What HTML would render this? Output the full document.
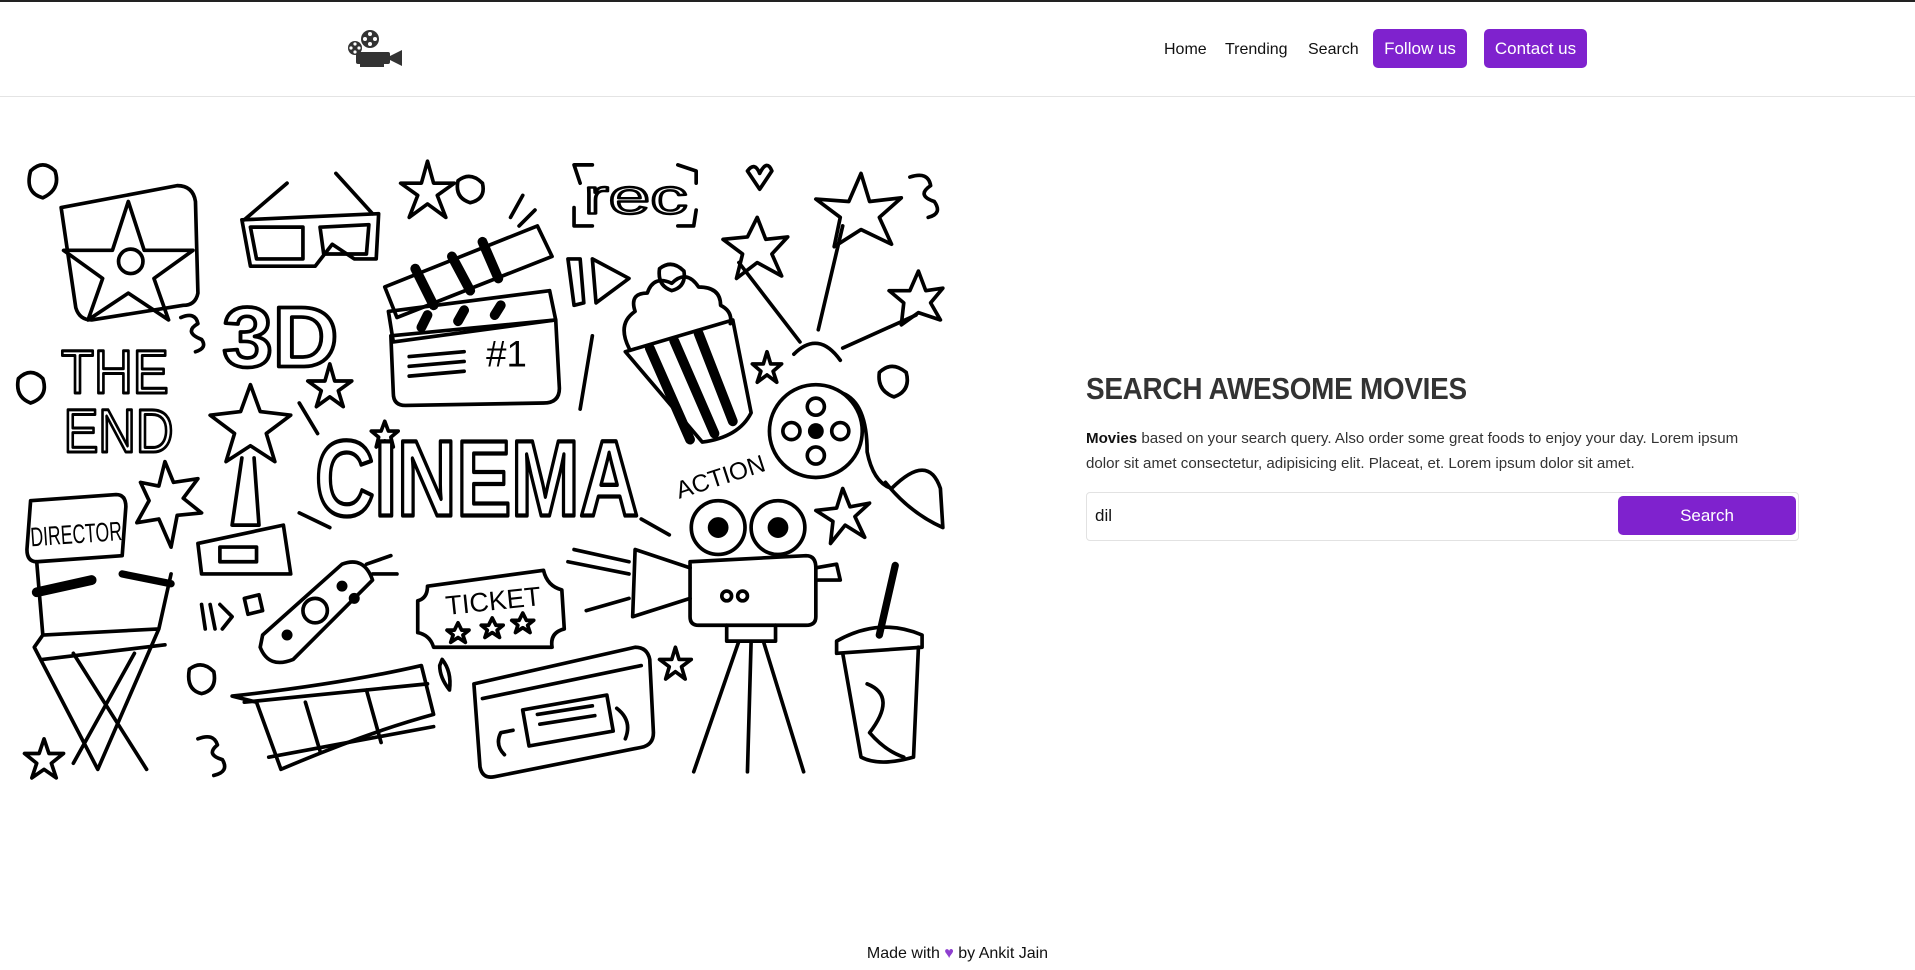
<!DOCTYPE html>
<html><head><meta charset="utf-8"><style>
*{margin:0;padding:0;box-sizing:border-box}
body{width:1915px;height:970px;background:#fff;position:relative;overflow:hidden;font-family:"Liberation Sans",sans-serif;color:#222}
.top{position:absolute;left:0;top:0;width:1915px;height:2px;background:#222}
.hb{position:absolute;left:0;top:96px;width:1915px;height:1px;background:#e4e4e4}
.nav{position:absolute;top:41px;font-size:16px;color:#111}
.btn{position:absolute;top:29px;height:39px;background:#7f22ce;color:#fff;border-radius:5px;font-size:17px;line-height:39px;text-align:center}
h1{position:absolute;left:1086px;top:371px;font-size:31px;font-weight:bold;color:#333;white-space:nowrap;transform:scaleX(.9);transform-origin:left;letter-spacing:-.3px}
.p{position:absolute;left:1086px;top:427px;font-size:15.1px;line-height:24.5px;color:#333;white-space:nowrap}
.inp{position:absolute;left:1086px;top:492px;width:713px;height:49px;border:1px solid #e2e2e2;border-radius:4px}
.sb{position:absolute;left:1618px;top:496px;width:178px;height:39px;background:#7f22ce;color:#fff;border-radius:5px;font-size:17px;line-height:39px;text-align:center}
.foot{position:absolute;left:0;width:1915px;top:945px;text-align:center;font-size:16px;color:#111}
</style></head><body>
<div class="top"></div>
<svg style="position:absolute;left:346px;top:30px" width="58" height="38" viewBox="0 0 58 38">
<g fill="#333"><circle cx="24" cy="9" r="9"/><circle cx="9" cy="18" r="7"/><rect x="10" y="22" width="34" height="12" rx="2"/><polygon points="44,26 56,20 56,36 44,30"/><rect x="14" y="34" width="24" height="3"/></g>
<g fill="#fff"><circle cx="24" cy="4" r="2"/><circle cx="24" cy="14" r="2"/><circle cx="19" cy="9" r="2"/><circle cx="29" cy="9" r="2"/><circle cx="9" cy="14" r="1.6"/><circle cx="9" cy="22" r="1.6"/><circle cx="5" cy="18" r="1.6"/><circle cx="13" cy="18" r="1.6"/></g>
</svg>
<div class="nav" style="left:1164px">Home</div>
<div class="nav" style="left:1225px">Trending</div>
<div class="nav" style="left:1308px">Search</div>
<div class="btn" style="left:1373px;width:94px">Follow us</div>
<div class="btn" style="left:1484px;width:103px">Contact us</div>
<div class="hb"></div>

<svg style="position:absolute;left:0;top:0" width="1915" height="970" viewBox="0 0 1568 794.3" fill="none" stroke="#000" stroke-width="3" stroke-linejoin="round" stroke-linecap="round">
<path d="M50 170 L145 152 Q158 152 160 165 L162 240 Q160 250 150 250 L75 262 Q65 262 62 252 Z"/>
<path d="M105 165 L118 205 L158 205 L126 228 L138 262 L105 240 L72 262 L84 228 L52 205 L92 205 Z"/><circle cx="107" cy="214" r="10"/>
<path d="M198 180 L310 175 L308 212 L290 212 L272 200 L258 218 L205 218 Z"/><path d="M205 186 L248 186 L248 212 L210 212 Z M262 186 L302 184 L300 208 L265 208 Z"/><path d="M200 180 L235 150 M305 175 L275 142"/>
<path d="M350 132 L355 150 L372 150 L358 160 L365 178 L350 167 L335 178 L342 160 L328 150 L345 150 Z"/>
<path d="M270 298 L274 312 L288 312 L277 320 L281 333 L270 325 L259 333 L263 320 L252 312 L266 312 Z"/>
<path d="M628 288 L631 298 L640 298 L633 304 L636 313 L628 307 L620 313 L623 304 L616 298 L625 298 Z"/>
<path d="M315 345 L318 353 L326 353 L320 358 L322 366 L315 361 L308 366 L310 358 L304 353 L312 353 Z"/>
<path d="M36 605 L40 617 L52 617 L42 625 L46 637 L36 630 L26 637 L30 625 L20 617 L32 617 Z"/>
<path d="M553 530 L556 540 L566 540 L558 546 L561 556 L553 550 L545 556 L548 546 L540 540 L550 540 Z"/>
<path d="M690 400 L696 415 L712 412 L700 423 L708 440 L692 430 L680 445 L682 427 L668 418 L685 416 Z"/>
<path d="M135 378 L142 395 L162 392 L150 408 L165 420 L145 422 L140 448 L130 425 L112 428 L122 410 L115 395 L130 398 Z"/>
<path d="M475 150 L470 135 L485 135 M470 170 L470 185 L485 185 M555 135 L570 140 L570 150 M570 172 L568 185 L555 185"/>
<text x="478" y="175" font-family="Liberation Sans" font-size="40" stroke-width="2" fill="none" textLength="85" lengthAdjust="spacingAndGlyphs">rec</text>
<path d="M612 140 Q618 132 622 142 Q628 130 632 140 L622 155 Z"/>
<path d="M320 275 L455 262 L458 318 Q458 330 445 330 L332 332 Q322 332 322 322 Z"/><path d="M315 235 L440 185 L452 210 L325 260 Z"/><path d="M318 255 L450 238 L455 262 L322 280 Z"/>
<path d="M340 220 L355 250 M370 210 L385 238 M395 198 L408 228 M345 268 L350 258 M375 263 L380 254 M405 258 L410 250" stroke-width="8"/>
<path d="M335 292 L380 288 M335 300 L380 296 M335 308 L380 304"/><text x="398" y="300" font-family="Liberation Sans" font-size="30" fill="#000" stroke="none">#1</text>
<path d="M465 212 L470 250 L478 248 L475 212 Z M485 212 L515 228 L488 248 Z"/>
<text x="182" y="300" font-family="Liberation Sans" font-weight="bold" font-size="70" stroke-width="3" fill="#fff" textLength="95" lengthAdjust="spacingAndGlyphs">3D</text>
<text x="50" y="322" font-family="Liberation Sans" font-size="50" stroke-width="2.5" fill="#fff" textLength="88" lengthAdjust="spacingAndGlyphs">THE</text>
<text x="52" y="370" font-family="Liberation Sans" font-size="50" stroke-width="2.5" fill="#fff" textLength="90" lengthAdjust="spacingAndGlyphs">END</text>
<path d="M512 288 L600 262 L615 338 Q605 358 575 362 Z"/><path d="M532 285 L565 360 M552 279 L585 355 M572 273 L600 345" stroke-width="8"/>
<path d="M515 285 Q505 265 520 255 Q515 240 530 240 Q535 225 550 232 Q562 220 572 235 Q590 235 590 250 Q600 255 598 265"/>
<path d="M650 290 Q670 270 688 295 M655 280 L605 215 M670 270 L690 185 M690 285 L750 258"/>
<path d="M620 178 L627 196 L645 194 L632 208 L640 226 L620 215 L603 228 L608 208 L592 196 L612 194 Z"/>
<path d="M705 142 L712 165 L738 162 L720 178 L730 200 L705 188 L683 202 L688 178 L668 163 L695 165 Z"/>
<path d="M752 222 L758 238 L772 236 L762 248 L770 262 L752 256 L738 266 L740 248 L728 238 L745 238 Z"/>
<circle cx="668" cy="353" r="38"/><circle cx="668" cy="353" r="5" fill="#000"/><circle cx="668" cy="333" r="7"/><circle cx="668" cy="373" r="7"/><circle cx="648" cy="353" r="7"/><circle cx="688" cy="353" r="7"/>
<path d="M690 322 Q710 330 710 370 Q715 395 730 400 Q760 370 770 400 L772 432 Q745 420 725 395"/>
<text x="258" y="422" font-family="Liberation Sans" font-weight="bold" font-size="88" stroke-width="3.5" fill="#fff" textLength="265" lengthAdjust="spacingAndGlyphs">CINEMA</text>
<path d="M260 355 L245 330 M245 420 L270 432 M485 275 L475 335 M525 425 L548 438"/>
<text x="550" y="400" font-family="Liberation Sans" font-size="20" fill="#000" stroke="none" transform="rotate(-18 580 385)">ACTION</text>
<path d="M205 315 L213 337 L238 340 L218 355 L225 378 L205 365 L185 378 L192 355 L172 340 L197 337 Z"/><path d="M198 375 L190 430 L212 430 L208 375"/><path d="M162 445 L232 430 L238 470 L165 470 Z"/><rect x="180" y="448" width="30" height="12"/>
<path d="M25 410 L95 405 Q103 405 103 415 L100 455 L30 460 Q22 460 22 450 Z"/><text x="25" y="445" font-family="Liberation Sans" font-size="22" fill="#000" stroke="none" transform="rotate(-4 60 440)" textLength="75" lengthAdjust="spacingAndGlyphs">DIRECTOR</text>
<path d="M30 460 L35 520 L130 515 L140 470 M35 520 L28 530 L80 630 M130 515 L80 630 M60 535 L120 630 M110 535 L60 625"/><path d="M30 485 L75 475" stroke-width="8"/><path d="M100 470 L140 478" stroke-width="6"/><path d="M35 540 L135 528"/>
<path d="M215 520 L280 462 Q298 455 305 475 L240 540 Q220 548 213 530 Z"/><circle cx="258" cy="500" r="10"/><circle cx="235" cy="520" r="3" fill="#000"/><circle cx="280" cy="480" r="3" fill="#000"/><circle cx="290" cy="490" r="3" fill="#000"/>
<path d="M300 462 L320 455 M305 470 L325 470"/><path d="M165 495 L168 515 M172 495 L176 515 M180 495 L190 505 L182 515 M200 490 L212 487 L215 500 L203 503 Z"/>
<path d="M350 480 L445 467 Q448 480 460 483 L462 515 Q450 518 452 530 L355 530 Q352 520 342 518 L342 492 Q350 490 350 480 Z"/><text x="365" y="500" font-family="Liberation Sans" font-size="22" fill="#000" stroke="none" transform="rotate(-6 400 495)">TICKET</text>
<path d="M375 510 l3 6 6 0 -5 4 2 6 -6 -4 -6 4 2 -6 -5 -4 6 0Z M403 506 l3 6 6 0 -5 4 2 6 -6 -4 -6 4 2 -6 -5 -4 6 0Z M428 502 l3 6 6 0 -5 4 2 6 -6 -4 -6 4 2 -6 -5 -4 6 0Z"/>
<path d="M190 570 Q280 560 345 545 L355 585 Q300 600 230 630 L210 575 Z"/><path d="M200 575 L350 560 M220 620 L355 595 M250 575 L262 615 M300 565 L312 608"/>
<path d="M362 540 Q370 550 368 565 Q360 555 360 545 Z"/>
<path d="M388 560 L520 530 Q530 530 532 540 L535 600 Q535 610 525 612 L405 636 Q395 638 393 628 Z"/><path d="M395 572 L525 545"/><path d="M420 598 L410 600 Q405 610 413 618 M505 580 Q518 590 512 605"/><rect x="430" y="575" width="70" height="30" transform="rotate(-10 465 590)"/><path d="M440 585 L485 578 M442 593 L487 586"/>
<circle cx="588" cy="432" r="22"/><circle cx="637" cy="432" r="22"/><circle cx="588" cy="432" r="7" fill="#000"/><circle cx="637" cy="432" r="7" fill="#000"/>
<path d="M565 460 L660 455 Q668 455 668 465 L668 505 Q668 512 660 512 L572 512 Q565 512 565 505 Z"/><circle cx="595" cy="488" r="4"/><circle cx="608" cy="488" r="4"/>
<path d="M565 465 L520 450 L518 505 L565 490"/><path d="M668 465 L685 462 L688 475 L670 475"/>
<path d="M595 512 L595 525 L635 525 L635 512 M605 525 L568 632 M625 525 L658 632 M615 525 L612 632"/><path d="M470 450 L515 460 M480 500 L515 490 M465 460 L515 470"/>
<path d="M685 525 Q720 505 755 520 L755 530 L685 535 Z"/><path d="M690 535 L705 620 Q720 628 748 620 L752 530"/><path d="M720 520 L733 463" stroke-width="6"/><path d="M710 560 Q735 570 712 600 Q725 615 740 620"/>
<path d="M25 140 Q35 130 45 140 Q50 155 35 162 Q20 158 25 140 Z M15 310 Q25 300 35 310 Q40 325 25 330 Q12 325 15 310 Z M155 548 Q165 540 175 550 Q178 565 165 568 Q152 565 155 548 Z M720 305 Q730 295 742 305 Q746 320 732 325 Q718 320 720 305 Z M540 220 Q550 212 560 222 Q562 235 550 238 Q538 234 540 220 Z M375 148 Q385 140 395 150 Q398 163 385 166 Q372 162 375 148 Z"/>
<path d="M745 145 Q760 140 762 152 Q750 160 765 165 Q772 175 760 178 M148 260 Q160 255 162 265 Q150 272 165 278 Q170 285 160 288 M162 605 Q175 600 178 610 Q168 618 182 622 Q188 632 175 635"/>
<path d="M418 178 L428 160 M425 185 L438 172"/>
</svg>

<h1>SEARCH AWESOME MOVIES</h1>
<div class="p"><b style="color:#111;font-weight:bold">Movies</b> based on your search query. Also order some great foods to enjoy your day. Lorem ipsum<br>dolor sit amet consectetur, adipisicing elit. Placeat, et. Lorem ipsum dolor sit amet.</div>
<div class="inp"><span style="position:absolute;left:8px;top:13px;font-size:17px;color:#111">dil</span></div>
<div class="sb">Search</div>
<div class="foot">Made with <span style="color:#8e3fcf">&#9829;</span> by Ankit Jain</div>
</body></html>
